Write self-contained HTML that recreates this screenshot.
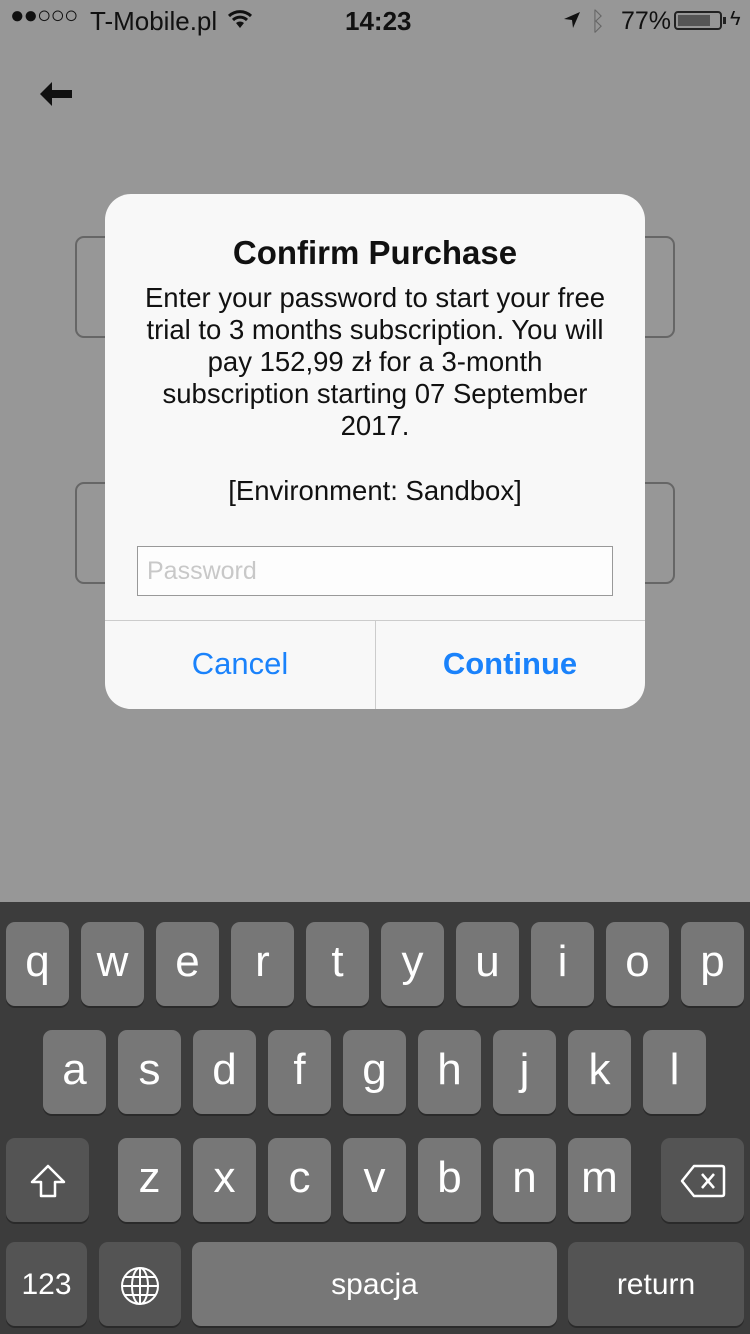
<!DOCTYPE html>
<html><head><meta charset="utf-8"><style>
*{margin:0;padding:0;box-sizing:border-box}
body{width:750px;height:1334px;background:#979797;position:relative;overflow:hidden;font-family:"Liberation Sans",sans-serif}
.abs{position:absolute}
.sb{font-size:26px;color:#111;top:6px}
.bg{position:absolute;left:75px;width:600px;border:2px solid #666;border-radius:9px}
.dlg{position:absolute;left:105px;top:194px;width:540px;height:515px;background:#f8f8f8;border-radius:26px;overflow:hidden}
.ln{position:absolute;left:0;width:540px;text-align:center;white-space:nowrap;color:#111;font-size:27.5px}
.kb{position:absolute;left:0;top:902px;width:750px;height:432px;background:#3c3c3c}
.k{position:absolute;width:63px;height:84px;background:#777;border-radius:9px;color:#fff;font-size:44px;text-align:center;line-height:80px;box-shadow:0 2px 0 #2a2a2a}
.s{background:#545454}
</style></head><body>
<div class="abs sb" style="left:10px;top:2px;font-size:24px;letter-spacing:-1px">●●○○○</div>
<div class="abs sb" style="left:90px">T-Mobile.pl</div>
<svg class="abs" style="left:227px;top:8px" width="26" height="22" viewBox="0 0 26 22"><path d="M2 8 A16 16 0 0 1 24 8" stroke="#111" stroke-width="3" fill="none"/><path d="M6 12 A10 10 0 0 1 20 12" stroke="#111" stroke-width="3" fill="none"/><path d="M13 20 L9 15 A6 6 0 0 1 17 15 Z" fill="#111"/></svg>
<div class="abs sb" style="left:345px;font-weight:bold">14:23</div>
<svg class="abs" style="left:562px;top:10px" width="20" height="20" viewBox="0 0 20 20"><path d="M18 2 L2 9 L10 10 L11 18 Z" fill="#111"/></svg>
<div class="abs" style="left:590px;top:6px;font-size:26px;color:#666">ᛒ</div>
<div class="abs sb" style="left:621px;font-size:25px;top:7px">77%</div>
<div class="abs" style="left:674px;top:11px;width:48px;height:19px;border:2px solid #222;border-radius:4px"><div style="position:absolute;left:2px;top:2px;width:32px;height:11px;background:#555"></div></div>
<div class="abs" style="left:723px;top:17px;width:3px;height:7px;background:#222"></div>
<div class="abs sb" style="left:730px;top:8px;font-size:20px">ϟ</div>
<svg class="abs" style="left:40px;top:80px" width="32" height="28" viewBox="0 0 32 28"><path d="M0 14 L12 2 L12 10 L32 10 L32 18 L12 18 L12 26 Z" fill="#111"/></svg>
<div class="bg" style="top:236px;height:102px"></div>
<div class="bg" style="top:482px;height:102px"></div>
<div class="dlg">
<div class="ln" style="top:40px;font-size:33px;font-weight:bold">Confirm Purchase</div>
<div class="ln" style="top:88px">Enter your password to start your free</div>
<div class="ln" style="top:120px">trial to 3 months subscription. You will</div>
<div class="ln" style="top:152px">pay 152,99 zł for a 3-month</div>
<div class="ln" style="top:184px">subscription starting 07 September</div>
<div class="ln" style="top:216px">2017.</div>
<div class="ln" style="top:281px">[Environment: Sandbox]</div>
<div class="abs" style="left:32px;top:352px;width:476px;height:50px;border:1px solid #999;background:#fdfdfd;color:#c8c8c8;font-size:25px;padding:10px 9px">Password</div>
<div class="abs" style="left:0;top:426px;width:540px;height:1px;background:#ccc"></div>
<div class="abs" style="left:270px;top:426px;width:1px;height:89px;background:#ccc"></div>
<div class="abs" style="left:0;top:452px;width:270px;text-align:center;color:#1a82fb;font-size:31px">Cancel</div>
<div class="abs" style="left:270px;top:452px;width:270px;text-align:center;color:#1a82fb;font-size:31px;font-weight:bold">Continue</div>
</div>
<div class="kb">
<div class="k" style="left:6px;top:20px">q</div><div class="k" style="left:81px;top:20px">w</div><div class="k" style="left:156px;top:20px">e</div><div class="k" style="left:231px;top:20px">r</div><div class="k" style="left:306px;top:20px">t</div><div class="k" style="left:381px;top:20px">y</div><div class="k" style="left:456px;top:20px">u</div><div class="k" style="left:531px;top:20px">i</div><div class="k" style="left:606px;top:20px">o</div><div class="k" style="left:681px;top:20px">p</div>
<div class="k" style="left:43px;top:128px">a</div><div class="k" style="left:118px;top:128px">s</div><div class="k" style="left:193px;top:128px">d</div><div class="k" style="left:268px;top:128px">f</div><div class="k" style="left:343px;top:128px">g</div><div class="k" style="left:418px;top:128px">h</div><div class="k" style="left:493px;top:128px">j</div><div class="k" style="left:568px;top:128px">k</div><div class="k" style="left:643px;top:128px">l</div>
<div class="k s" style="left:6px;top:236px;width:83px"><svg style="margin-top:26px" width="36" height="34" viewBox="0 0 36 34"><path d="M18 2 L34 18 L25 18 L25 32 L11 32 L11 18 L2 18 Z" fill="none" stroke="#fff" stroke-width="2.5" stroke-linejoin="round"/></svg></div>
<div class="k" style="left:118px;top:236px">z</div><div class="k" style="left:193px;top:236px">x</div><div class="k" style="left:268px;top:236px">c</div><div class="k" style="left:343px;top:236px">v</div><div class="k" style="left:418px;top:236px">b</div><div class="k" style="left:493px;top:236px">n</div><div class="k" style="left:568px;top:236px">m</div>
<div class="k s" style="left:661px;top:236px;width:83px"><svg style="margin-top:26px" width="46" height="34" viewBox="0 0 46 34"><path d="M14 2 L42 2 Q44 2 44 4 L44 30 Q44 32 42 32 L14 32 L2 17 Z" fill="none" stroke="#fff" stroke-width="2.5" stroke-linejoin="round"/><path d="M22 10 L34 24 M34 10 L22 24" stroke="#fff" stroke-width="2.5"/></svg></div>
<div class="k s" style="left:6px;top:340px;width:81px;font-size:30px;line-height:86px">123</div>
<div class="k s" style="left:99px;top:340px;width:82px"><svg style="margin-top:24px" width="40" height="40" viewBox="0 0 40 40" fill="none" stroke="#fff" stroke-width="2"><circle cx="20" cy="20" r="18"/><ellipse cx="20" cy="20" rx="8" ry="18"/><path d="M20 2 V38 M2 20 H38 M5 11 H35 M5 29 H35"/></svg></div>
<div class="k" style="left:192px;top:340px;width:365px;font-size:30px;line-height:86px">spacja</div>
<div class="k s" style="left:568px;top:340px;width:176px;font-size:30px;line-height:86px">return</div>
</div>
</body></html>
